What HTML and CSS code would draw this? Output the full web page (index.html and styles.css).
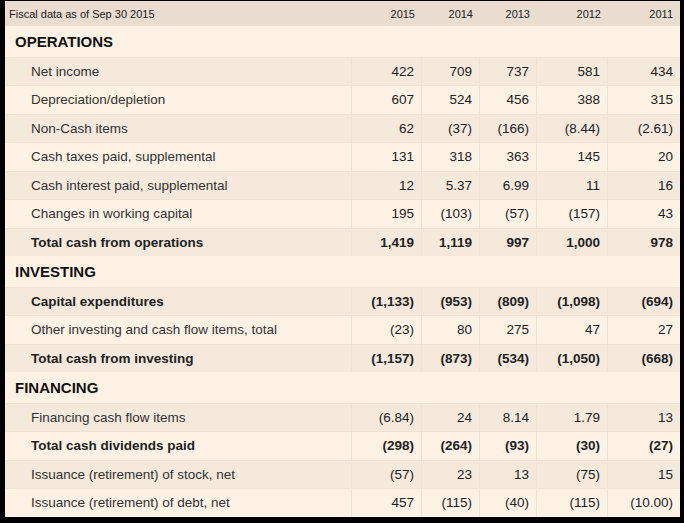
FILE: index.html
```html
<!DOCTYPE html>
<html>
<head>
<meta charset="utf-8">
<link rel="stylesheet" href="styles.css">
</head>
<body>
<div class="sheet">
  <div class="row head">
    <div class="lbl">Fiscal data as of Sep 30 2015</div>
    <div class="num">2015</div><div class="num">2014</div><div class="num">2013</div><div class="num">2012</div><div class="num">2011</div>
  </div>

  <div class="section">OPERATIONS</div>
  <div class="row d odd"><div class="lbl">Net income</div><div class="num">422</div><div class="num">709</div><div class="num">737</div><div class="num">581</div><div class="num">434</div></div>
  <div class="row d"><div class="lbl">Depreciation/depletion</div><div class="num">607</div><div class="num">524</div><div class="num">456</div><div class="num">388</div><div class="num">315</div></div>
  <div class="row d odd"><div class="lbl">Non-Cash items</div><div class="num">62</div><div class="num">(37)</div><div class="num">(166)</div><div class="num">(8.44)</div><div class="num">(2.61)</div></div>
  <div class="row d"><div class="lbl">Cash taxes paid, supplemental</div><div class="num">131</div><div class="num">318</div><div class="num">363</div><div class="num">145</div><div class="num">20</div></div>
  <div class="row d odd"><div class="lbl">Cash interest paid, supplemental</div><div class="num">12</div><div class="num">5.37</div><div class="num">6.99</div><div class="num">11</div><div class="num">16</div></div>
  <div class="row d"><div class="lbl">Changes in working capital</div><div class="num">195</div><div class="num">(103)</div><div class="num">(57)</div><div class="num">(157)</div><div class="num">43</div></div>
  <div class="row d odd bold"><div class="lbl">Total cash from operations</div><div class="num">1,419</div><div class="num">1,119</div><div class="num">997</div><div class="num">1,000</div><div class="num">978</div></div>

  <div class="section">INVESTING</div>
  <div class="row d odd bold"><div class="lbl">Capital expenditures</div><div class="num">(1,133)</div><div class="num">(953)</div><div class="num">(809)</div><div class="num">(1,098)</div><div class="num">(694)</div></div>
  <div class="row d"><div class="lbl">Other investing and cash flow items, total</div><div class="num">(23)</div><div class="num">80</div><div class="num">275</div><div class="num">47</div><div class="num">27</div></div>
  <div class="row d odd bold"><div class="lbl">Total cash from investing</div><div class="num">(1,157)</div><div class="num">(873)</div><div class="num">(534)</div><div class="num">(1,050)</div><div class="num">(668)</div></div>

  <div class="section">FINANCING</div>
  <div class="row d odd"><div class="lbl">Financing cash flow items</div><div class="num">(6.84)</div><div class="num">24</div><div class="num">8.14</div><div class="num">1.79</div><div class="num">13</div></div>
  <div class="row d bold"><div class="lbl">Total cash dividends paid</div><div class="num">(298)</div><div class="num">(264)</div><div class="num">(93)</div><div class="num">(30)</div><div class="num">(27)</div></div>
  <div class="row d odd"><div class="lbl">Issuance (retirement) of stock, net</div><div class="num">(57)</div><div class="num">23</div><div class="num">13</div><div class="num">(75)</div><div class="num">15</div></div>
  <div class="row d"><div class="lbl">Issuance (retirement) of debt, net</div><div class="num">457</div><div class="num">(115)</div><div class="num">(40)</div><div class="num">(115)</div><div class="num">(10.00)</div></div>
</div>
</body>
</html>
```

FILE: styles.css
```css
html, body {
  margin: 0;
  padding: 0;
  background: #000;
}
body {
  padding: 1px 4px 6px 5px;
  font-family: "Liberation Sans", Arial, sans-serif;
  color: #333;
}
.sheet {
  width: 675px;
  background: #fdf2e4;
}
.row {
  display: grid;
  grid-template-columns: 347px 70px 58px 57px 71px 72px;
  align-items: center;
}
.row > div {
  height: 100%;
  display: flex;
  align-items: center;
  box-sizing: border-box;
}
.num {
  justify-content: flex-end;
  padding-right: 7px;
}
.head {
  height: 25px;
  background: #e8ddcf;
  font-size: 11px;
  color: #222;
}
.head .lbl {
  padding-left: 4px;
}
.section {
  height: 30.5px;
  display: flex;
  align-items: center;
  padding-left: 10px;
  font-size: 15px;
  font-weight: bold;
  color: #111;
  background: #fdf2e4;
}
.d {
  height: 28.5px;
  font-size: 13.5px;
  border-top: 1px solid #efe3d2;
  box-sizing: border-box;
}
.d.odd {
  background: #f4e9da;
}
.d .lbl {
  padding-left: 26px;
  border-right: 1px solid #efe3d2;
}
.d .num {
  color: #222;
  border-right: 1px solid #efe3d2;
}
.d .num:last-child {
  border-right: none;
}
.bold {
  font-weight: bold;
}
.bold .lbl {
  color: #222;
}
```
